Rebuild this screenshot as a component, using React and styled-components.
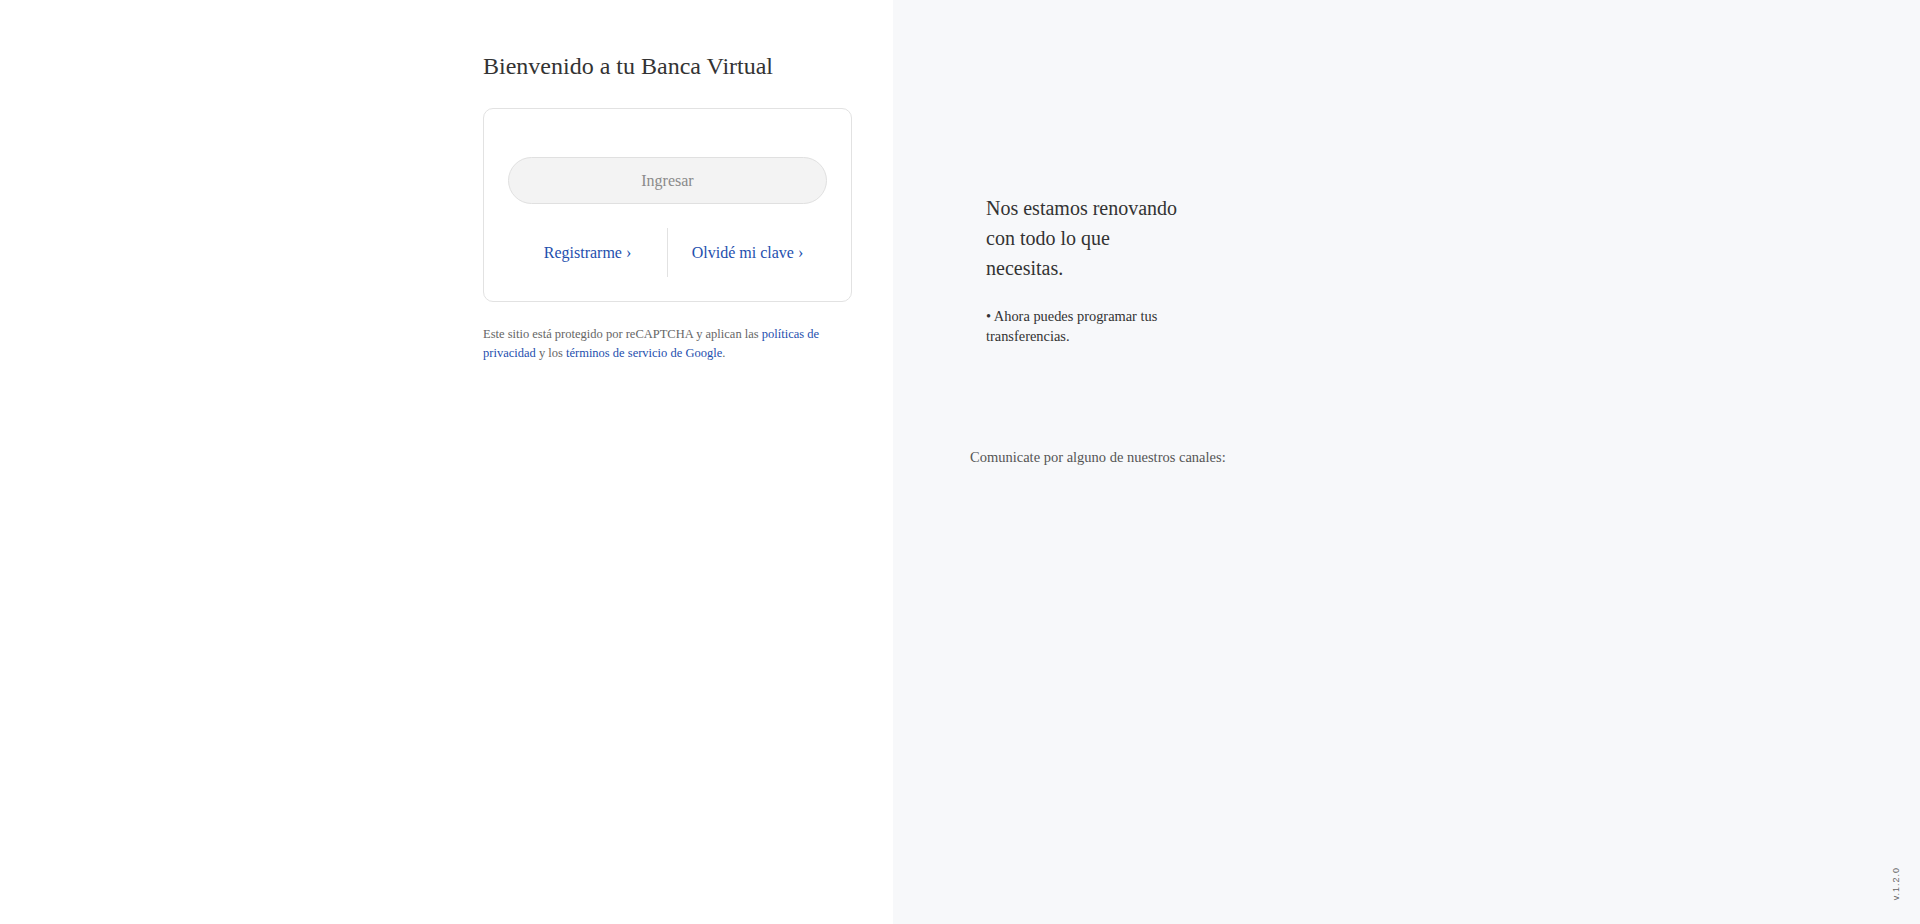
import React from 'react';
import styled, { createGlobalStyle } from 'styled-components';

const GlobalStyle = createGlobalStyle`
    html, body {
        margin: 0;
        padding: 0;
        height: 100%;
    }
    body {
        font-family: 'Liberation Serif', 'Times New Roman', serif;
        color: #333;
    }
`
const Page = styled.div`
    display: flex;
    flex-direction: row;
    height: 100vh;
    width: 100%;
`
const LeftSide = styled.div`
    flex: 0 0 893px;
    display: flex;
    justify-content: flex-end;
    padding-right: 41px;
    box-sizing: border-box;
    background: #fff;
`
const LoginColumn = styled.div`
    width: 369px;
    padding-top: 52px;
`
const Title = styled.h1`
    margin: 0 0 28px 0;
    font-size: 24px;
    font-weight: normal;
    line-height: 28px;
    color: #333;
`
const Card = styled.div`
    border: 1px solid #e2e2e2;
    border-radius: 10px;
    padding: 48px 24px 24px 24px;
    box-sizing: border-box;
`
const LoginBtn = styled.button`
    display: block;
    width: 100%;
    height: 47px;
    border-radius: 24px;
    border: 1px solid #e0e0e0;
    background-color: #f3f3f3;
    color: #8a8a8a;
    font-family: inherit;
    font-size: 16px;
    cursor: pointer;
`
const LinkRow = styled.div`
    display: flex;
    flex-direction: row;
    margin-top: 24px;
    height: 49px;
`
const LinkCell = styled.a`
    flex: 1;
    display: flex;
    align-items: center;
    justify-content: center;
    font-size: 16px;
    color: #1e4fae;
    text-decoration: none;
    cursor: pointer;
    border-left: ${props => props.divider ? '1px solid #e2e2e2' : 'none'};
`
const Legal = styled.p`
    margin: 23px 0 0 0;
    font-size: 12.5px;
    line-height: 18.5px;
    color: #666;
`
const BlueLink = styled.a`
    color: #1e4fae;
    text-decoration: none;
`
const RightSide = styled.div`
    flex: 1;
    position: relative;
    background: #f7f8fa;
    padding-left: 93px;
    padding-top: 193px;
    box-sizing: border-box;
`
const News = styled.div`
    width: 200px;
`
const NewsTitle = styled.h2`
    margin: 0;
    font-size: 20px;
    font-weight: normal;
    line-height: 30px;
    color: #333;
`
const NewsItem = styled.p`
    margin: 24px 0 0 0;
    font-size: 14.4px;
    line-height: 19.5px;
    color: #333;
`
const Channels = styled.p`
    margin: 103px 0 0 -16px;
    font-size: 14.5px;
    line-height: 17px;
    color: #555;
`
const Version = styled.span`
    position: absolute;
    right: 19px;
    bottom: 24px;
    font-family: 'Liberation Sans', Arial, sans-serif;
    font-size: 9px;
    letter-spacing: 1px;
    color: #666;
    writing-mode: vertical-rl;
    transform: rotate(180deg);
`

const App = () => {
    return (
        <Page>
            <GlobalStyle />
            <LeftSide>
                <LoginColumn>
                    <Title>Bienvenido a tu Banca Virtual</Title>
                    <Card>
                        <LoginBtn>Ingresar</LoginBtn>
                        <LinkRow>
                            <LinkCell>Registrarme ›</LinkCell>
                            <LinkCell divider>Olvidé mi clave ›</LinkCell>
                        </LinkRow>
                    </Card>
                    <Legal>
                        Este sitio está protegido por reCAPTCHA y aplican las <BlueLink>políticas de privacidad</BlueLink> y los <BlueLink>términos de servicio de Google</BlueLink>.
                    </Legal>
                </LoginColumn>
            </LeftSide>
            <RightSide>
                <News>
                    <NewsTitle>Nos estamos renovando con todo lo que necesitas.</NewsTitle>
                    <NewsItem>• Ahora puedes programar tus transferencias.</NewsItem>
                </News>
                <Channels>Comunicate por alguno de nuestros canales:</Channels>
                <Version>v.1.2.0</Version>
            </RightSide>
        </Page>
    );
}

export default App;
